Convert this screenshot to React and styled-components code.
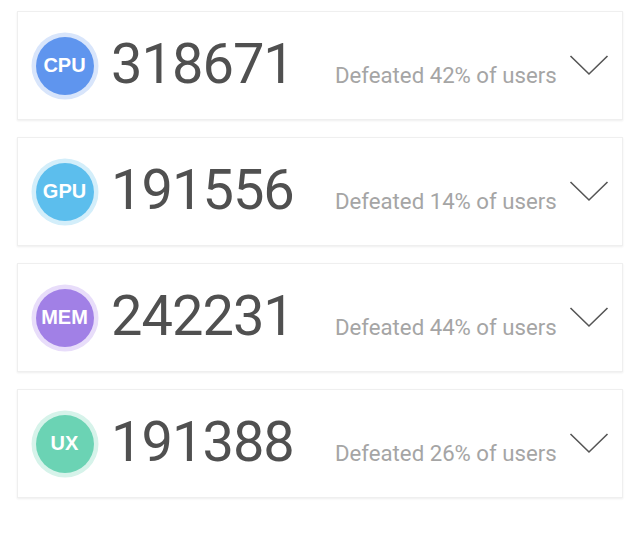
import React from "react";
import styled, { createGlobalStyle } from "styled-components";

const Global = createGlobalStyle`
  html, body { margin: 0; padding: 0; background: #ffffff; }
  body { font-family: Roboto, "Liberation Sans", sans-serif; }
`;

const Page = styled.div`
  width: 640px;
  height: 560px;
  box-sizing: border-box;
  padding: 11px 17px 0 17px;
  display: flex;
  flex-direction: column;
  gap: 17px;
  background: #ffffff;
`;

const Card = styled.div`
  height: 109px;
  box-sizing: border-box;
  background: #ffffff;
  border: 1px solid #efefef;
  box-shadow: 0 1px 2px rgba(0, 0, 0, 0.07);
  display: flex;
  align-items: center;
  padding: 0 13px 0 13px;
`;

const Badge = styled.div`
  width: 58px;
  height: 58px;
  flex: none;
  margin: 0 4.5px;
  border-radius: 50%;
  background: ${(p) => p.$color};
  box-shadow: 0 0 0 4.5px ${(p) => p.$ring};
  display: flex;
  align-items: center;
  justify-content: center;
  color: #ffffff;
  font-family: "Liberation Sans", Arial, sans-serif;
  font-weight: 700;
  font-size: 20px;
`;

const ScoreRow = styled.div`
  flex: 1;
  display: flex;
  align-items: baseline;
  margin-left: 13px;
  margin-top: -3px;
`;

const Score = styled.div`
  width: 224px;
  flex: none;
  font-family: Roboto, "Liberation Sans", sans-serif;
  font-size: 56px;
  line-height: 1;
  letter-spacing: -1px;
  color: #505050;
`;

const Defeated = styled.div`
  font-family: Roboto, "Liberation Sans", sans-serif;
  font-size: 22.2px;
  color: #a5a5a5;
`;

const Chevron = styled.svg`
  flex: none;
  width: 40px;
  height: 22px;
  margin-top: -2px;
  margin-left: auto;
`;

const items = [
  { label: "CPU", score: "318671", pct: 42, color: "#5f95ee", ring: "#d8e5fb" },
  { label: "GPU", score: "191556", pct: 14, color: "#5cbeed", ring: "#d3eefa" },
  { label: "MEM", score: "242231", pct: 44, color: "#a180e6", ring: "#e8ddfa" },
  { label: "UX", score: "191388", pct: 26, color: "#6bd3b4", ring: "#d6f3ea" },
];

export default function App() {
  return (
    <>
      <Global />
      <Page>
        {items.map((it) => (
          <Card key={it.label}>
            <Badge $color={it.color} $ring={it.ring}>
              {it.label}
            </Badge>
            <ScoreRow>
              <Score>{it.score}</Score>
              <Defeated>Defeated {it.pct}% of users</Defeated>
            </ScoreRow>
            <Chevron viewBox="0 0 40 22">
              <polyline
                points="1.5,2 20,20 38.5,2"
                fill="none"
                stroke="#555555"
                strokeWidth="1.6"
              />
            </Chevron>
          </Card>
        ))}
      </Page>
    </>
  );
}
